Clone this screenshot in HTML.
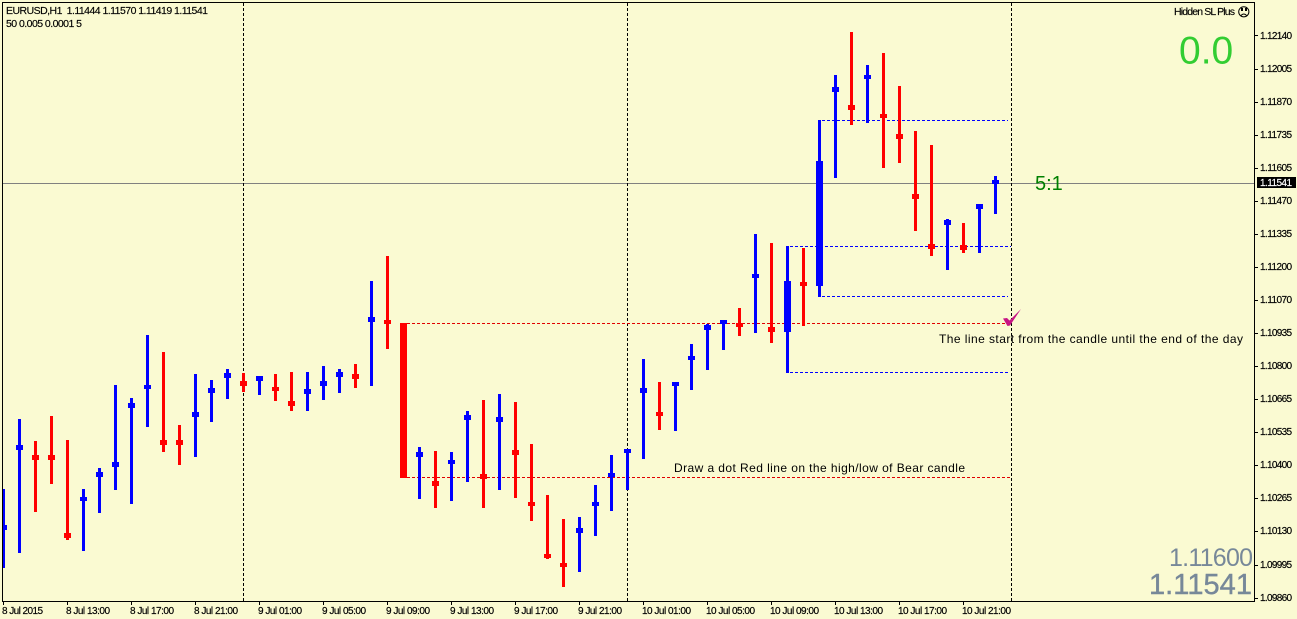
<!DOCTYPE html>
<html><head><meta charset="utf-8"><title>EURUSD,H1</title>
<style>
html,body{margin:0;padding:0;background:#FAFAD2;width:1297px;height:619px;overflow:hidden}
svg{display:block;position:absolute;left:0;top:0}
text{font-family:"Liberation Sans",Arial,sans-serif;fill:#000}
.a text{font-size:10px;stroke:#000;stroke-width:.18px}
.a text.w{fill:#fff;stroke:#fff}
.t{font-size:10.5px;stroke:#000;stroke-width:.15px}
</style></head><body>
<svg width="1297" height="619" viewBox="0 0 1297 619" xmlns="http://www.w3.org/2000/svg">
<rect width="1297" height="619" fill="#FAFAD2"/>
<g shape-rendering="crispEdges">
<path d="M3 183.5H1254" stroke="#808080" stroke-width="1" fill="none"/>
<g fill="none" stroke="#000" stroke-dasharray="3 2"><path d="M243.5 3V601M627.5 3V601M1011.5 3V601"/></g>
<g fill="none" stroke="#e00000" stroke-dasharray="3 2"><path d="M407 323.5H1005M407 477.5H1011"/></g>
<g fill="none" stroke="#0000ff" stroke-dasharray="3 2"><path d="M822 120.5H1008M790 246.5H1011M822 296.5H1008M790 372.5H1008"/></g>
<!-- blue candles -->
<path fill="#0000ff" d="M3 489h2v79h-2zM3 525h4v5h-4z
M18 419h3v134h-3zM16 445h7v5h-7z
M82 489h3v62h-3zM80 497h7v4h-7z
M98 468h3v45h-3zM96 472h7v5h-7z
M114 385h3v105h-3zM112 462h7v5h-7z
M130 398h3v106h-3zM128 403h7v5h-7z
M146 335h3v92h-3zM144 385h7v4h-7z
M194 374h3v83h-3zM192 412h7v5h-7z
M210 380h3v42h-3zM208 388h7v5h-7z
M226 369h3v30h-3zM224 373h7v5h-7z
M258 376h3v19h-3zM256 376h7v5h-7z
M306 372h3v39h-3zM304 389h7v5h-7z
M322 366h3v34h-3zM320 381h7v5h-7z
M338 369h3v24h-3zM336 372h7v5h-7z
M370 281h3v105h-3zM368 317h7v5h-7z
M418 447h3v52h-3zM416 452h7v5h-7z
M450 452h3v49h-3zM448 460h7v4h-7z
M466 411h3v71h-3zM464 415h7v5h-7z
M498 394h3v96h-3zM496 417h7v5h-7z
M578 517h3v55h-3zM576 528h7v5h-7z
M594 485h3v51h-3zM592 502h7v4h-7z
M610 455h3v56h-3zM608 473h7v4h-7z
M626 449h3v41h-3zM624 449h7v4h-7z
M642 359h3v100h-3zM640 388h7v5h-7z
M674 382h3v49h-3zM672 382h7v4h-7z
M690 344h3v46h-3zM688 356h7v4h-7z
M706 324h3v46h-3zM704 325h7v5h-7z
M722 320h3v30h-3zM720 320h7v4h-7z
M754 234h3v99h-3zM752 274h7v4h-7z
M786 246h3v127h-3zM784 281h7v51h-7z
M818 120h3v177h-3zM816 161h7v125h-7z
M834 75h3v103h-3zM832 87h7v5h-7z
M866 65h3v58h-3zM864 75h7v4h-7z
M946 219h3v51h-3zM944 220h7v5h-7z
M978 204h3v49h-3zM976 204h7v5h-7z
M994 176h3v38h-3zM992 180h7v4h-7z"/>
<!-- red candles -->
<path fill="#ff0000" d="M34 441h3v71h-3zM32 455h7v5h-7z
M50 416h3v68h-3zM48 455h7v5h-7z
M66 440h3v100h-3zM64 533h7v5h-7z
M162 352h3v100h-3zM160 440h7v5h-7z
M178 425h3v40h-3zM176 440h7v5h-7z
M242 373h3v19h-3zM240 381h7v5h-7z
M274 374h3v27h-3zM272 387h7v4h-7z
M290 372h3v39h-3zM288 401h7v5h-7z
M354 364h3v24h-3zM352 374h7v5h-7z
M386 256h3v93h-3zM384 320h7v4h-7z
M400 323h7v155h-7z
M434 451h3v57h-3zM432 481h7v5h-7z
M482 400h3v108h-3zM480 474h7v5h-7z
M514 402h3v96h-3zM512 450h7v5h-7z
M530 444h3v77h-3zM528 502h7v4h-7z
M546 495h3v64h-3zM544 554h7v4h-7z
M562 519h3v68h-3zM560 563h7v4h-7z
M658 382h3v48h-3zM656 412h7v4h-7z
M738 308h3v28h-3zM736 323h7v4h-7z
M770 243h3v100h-3zM768 327h7v5h-7z
M802 248h3v78h-3zM800 282h7v4h-7z
M850 32h3v93h-3zM848 105h7v5h-7z
M882 53h3v115h-3zM880 114h7v4h-7z
M898 86h3v77h-3zM896 134h7v5h-7z
M914 131h3v100h-3zM912 194h7v5h-7z
M930 145h3v111h-3zM928 244h7v5h-7z
M962 223h3v30h-3zM960 245h7v5h-7z"/>
<!-- frame -->
<path fill="#000" d="M2 2h1253v1H2zM2 2h1v600H2zM1254 2h1v600h-1zM2 601h1253v1H2z"/>
<!-- axis ticks -->
<path fill="#000" d="M1255 35h3v1h-3zM1255 69h3v1h-3zM1255 102h3v1h-3zM1255 135h3v1h-3zM1255 168h3v1h-3zM1255 201h3v1h-3zM1255 234h3v1h-3zM1255 267h3v1h-3zM1255 300h3v1h-3zM1255 333h3v1h-3zM1255 366h3v1h-3zM1255 399h3v1h-3zM1255 432h3v1h-3zM1255 465h3v1h-3zM1255 498h3v1h-3zM1255 531h3v1h-3zM1255 565h3v1h-3zM1255 598h3v1h-3z
M3 602h1v3H3zM67 602h1v3h-1zM131 602h1v3h-1zM195 602h1v3h-1zM259 602h1v3h-1zM323 602h1v3h-1zM387 602h1v3h-1zM451 602h1v3h-1zM515 602h1v3h-1zM579 602h1v3h-1zM643 602h1v3h-1zM707 602h1v3h-1zM771 602h1v3h-1zM835 602h1v3h-1zM899 602h1v3h-1zM963 602h1v3h-1z"/>
<rect x="1257" y="177" width="39" height="11" fill="#000"/>
</g>
<!-- check mark -->
<path d="M1003 318.5L1007 318L1009.5 320.5L1021 309L1010 325.5L1007.5 326Z" fill="#C71585"/>
<!-- sad face -->
<g fill="none" stroke="#000" stroke-width="1"><circle cx="1243.8" cy="11.8" r="5.1"/><path d="M1241 15.5Q1243.8 12.6 1246.6 15.5"/></g>
<path d="M1241 8h2v3h-2zM1245 8h2v3h-2z" fill="#000"/>
<!-- header -->
<text x="6" y="14" class="t" textLength="202" xml:space="preserve">EURUSD,H1  1.11444 1.11570 1.11419 1.11541</text>
<text x="6" y="27" class="t" textLength="76">50 0.005 0.0001 5</text>
<text x="1174" y="15" class="t" textLength="61">Hidden SL Plus</text>
<text x="1179" y="63.5" style="font-size:39px;fill:#32CD32">0.0</text>
<text x="1035" y="190" style="font-size:20px;fill:#008000">5:1</text>
<text x="1169" y="566" style="font-size:25px;fill:#778899" textLength="84">1.11600</text>
<text x="1149" y="594" style="font-size:29px;fill:#778899;stroke:#778899;stroke-width:.4px" textLength="103">1.11541</text>
<text x="939" y="343" style="font-size:12px" textLength="304">The line start from the candle until the end of the day</text>
<text x="674" y="472" style="font-size:12px" textLength="291">Draw a dot Red line on the high/low of Bear candle</text>
<!-- price axis -->
<g class="a">
<text x="1260" y="39" textLength="32">1.12140</text>
<text x="1260" y="72" textLength="32">1.12005</text>
<text x="1260" y="105" textLength="32">1.11870</text>
<text x="1260" y="138" textLength="32">1.11735</text>
<text x="1260" y="171" textLength="32">1.11605</text>
<text x="1260" y="204" textLength="32">1.11470</text>
<text x="1260" y="237" textLength="32">1.11335</text>
<text x="1260" y="270" textLength="32">1.11200</text>
<text x="1260" y="303" textLength="32">1.11070</text>
<text x="1260" y="336" textLength="32">1.10935</text>
<text x="1260" y="369" textLength="32">1.10800</text>
<text x="1260" y="402" textLength="32">1.10665</text>
<text x="1260" y="435" textLength="32">1.10535</text>
<text x="1260" y="468" textLength="32">1.10400</text>
<text x="1260" y="501" textLength="32">1.10265</text>
<text x="1260" y="534" textLength="32">1.10130</text>
<text x="1260" y="568" textLength="32">1.09995</text>
<text x="1260" y="601" textLength="32">1.09860</text>
<text x="1260" y="186" textLength="32" class="w">1.11541</text>
</g>
<!-- time axis -->
<g class="a">
<text x="2" y="614" textLength="41">8 Jul 2015</text>
<text x="66" y="614" textLength="44">8 Jul 13:00</text>
<text x="130" y="614" textLength="44">8 Jul 17:00</text>
<text x="194" y="614" textLength="44">8 Jul 21:00</text>
<text x="258" y="614" textLength="44">9 Jul 01:00</text>
<text x="322" y="614" textLength="44">9 Jul 05:00</text>
<text x="386" y="614" textLength="44">9 Jul 09:00</text>
<text x="450" y="614" textLength="44">9 Jul 13:00</text>
<text x="514" y="614" textLength="44">9 Jul 17:00</text>
<text x="578" y="614" textLength="44">9 Jul 21:00</text>
<text x="642" y="614" textLength="49">10 Jul 01:00</text>
<text x="706" y="614" textLength="49">10 Jul 05:00</text>
<text x="770" y="614" textLength="49">10 Jul 09:00</text>
<text x="834" y="614" textLength="49">10 Jul 13:00</text>
<text x="898" y="614" textLength="49">10 Jul 17:00</text>
<text x="962" y="614" textLength="49">10 Jul 21:00</text>
</g>
</svg>
</body></html>
